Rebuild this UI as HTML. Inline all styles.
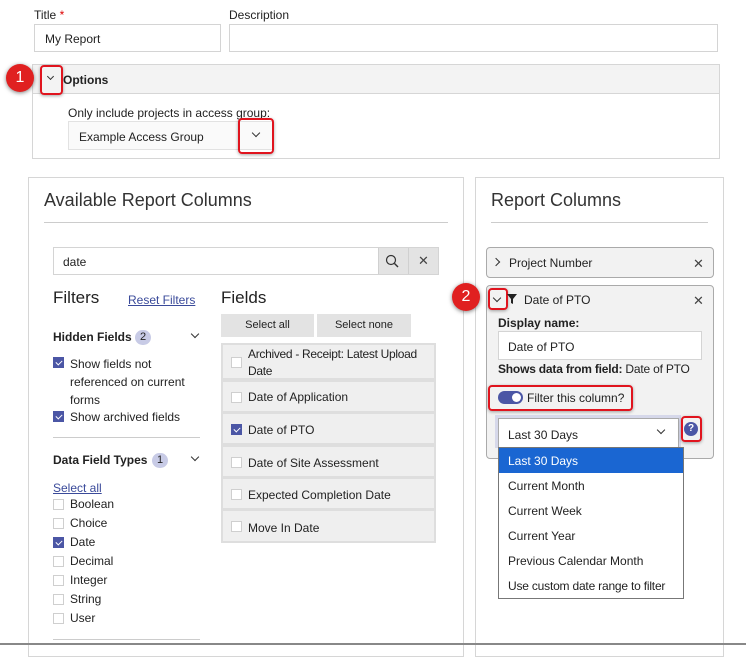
<!DOCTYPE html>
<html><head><meta charset="utf-8"><style>
*{box-sizing:border-box;margin:0;padding:0}
body{width:746px;height:645px;overflow:hidden;background:#fff;font-family:"Liberation Sans",sans-serif;font-size:12px;color:#222;position:relative}
.a{position:absolute;white-space:nowrap}
.inp{position:absolute;border:1px solid #d4d4d4;background:#fff}
.red{position:absolute;border:2px solid #e0141e;border-radius:4px;box-shadow:0 1px 3px rgba(0,0,0,.35)}
.badge{position:absolute;width:28px;height:28px;border-radius:50%;background:#e02020;color:#fff;font-size:16px;text-align:center;line-height:28px;box-shadow:0 1px 4px rgba(0,0,0,.5)}
.cb{position:absolute;width:11px;height:11px;border:1px solid #cfcfcf;background:#fff}
.cb.on{background:#4b56a5;border-color:#4b56a5}
.cb.on:after{content:"";position:absolute;left:3px;top:1px;width:3px;height:5px;border:solid #fff;border-width:0 1px 1px 0;transform:rotate(45deg)}
.row{position:absolute;left:221px;width:215px;background:#efefef;border:2px solid #dedede}
.chev{position:absolute;width:7px;height:7px;border:solid #333;border-width:0 1px 1px 0;transform:rotate(45deg)}
.lnk{color:#3a4a9a;text-decoration:underline}
</style></head><body>
<div class="a" style="left:34px;top:8px">Title <span style="color:#d00">*</span></div>
<div class="a" style="left:229px;top:8px">Description</div>
<div class="inp" style="left:34px;top:24px;width:187px;height:28px"><span class="a" style="left:10px;top:7px">My Report</span></div>
<div class="inp" style="left:229px;top:24px;width:489px;height:28px"></div>

<div class="a" style="left:32px;top:64px;width:688px;height:95px;border:1px solid #d6d6d6"></div>
<div class="a" style="left:33px;top:65px;width:686px;height:29px;background:#f3f3f3;border-bottom:1px solid #d6d6d6"></div>
<div class="chev" style="left:48px;top:74px;width:5px;height:5px"></div>
<div class="a" style="left:63px;top:73px;font-weight:bold">Options</div>
<div class="red" style="left:40px;top:65px;width:23px;height:30px"></div>
<div class="badge" style="left:6px;top:64px">1</div>
<div class="a" style="left:68px;top:106px">Only include projects in access group:</div>
<div class="inp" style="left:68px;top:121px;width:205px;height:29px;background:#fafafa;border-color:#e2e2e2"><span class="a" style="left:10px;top:8px">Example Access Group</span></div>
<div class="chev" style="left:253px;top:130px;width:6px;height:6px"></div>
<div class="red" style="left:238px;top:118px;width:36px;height:36px"></div>

<!-- left panel -->
<div class="a" style="left:28px;top:177px;width:436px;height:480px;border:1px solid #d6d6d6"></div>
<div class="a" style="left:44px;top:190px;font-size:18px;color:#333">Available Report Columns</div>
<div class="a" style="left:44px;top:222px;width:404px;height:1px;background:#ccc"></div>
<div class="inp" style="left:53px;top:247px;width:386px;height:28px"><span class="a" style="left:9px;top:7px">date</span></div>
<div class="a" style="left:378px;top:248px;width:30px;height:26px;background:#e3e3e3;border-left:1px solid #d0d0d0"></div>
<div class="a" style="left:408px;top:248px;width:30px;height:26px;background:#e3e3e3;border-left:1px solid #d0d0d0;text-align:center;line-height:26px;font-size:13px;color:#444">✕</div>
<svg class="a" style="left:385px;top:254px" width="15" height="15"><circle cx="6" cy="6" r="4.5" fill="none" stroke="#333" stroke-width="1.2"/><path d="M9.5 9.5 L13 13" stroke="#333" stroke-width="1.4"/></svg>

<div class="a" style="left:53px;top:288px;font-size:17px;color:#222">Filters</div>
<div class="a lnk" style="left:128px;top:293px">Reset Filters</div>
<div class="a" style="left:53px;top:330px;font-weight:bold">Hidden Fields</div>
<div class="a" style="left:135px;top:330px;width:16px;height:15px;border-radius:8px;background:#c8cbe6;font-size:11px;text-align:center;line-height:15px">2</div>
<div class="chev" style="left:192px;top:331px;width:6px;height:6px"></div>
<div class="cb on" style="left:53px;top:357px"></div>
<div class="a" style="left:70px;top:355px;line-height:18px">Show fields not<br>referenced on current<br>forms</div>
<div class="cb on" style="left:53px;top:411px"></div>
<div class="a" style="left:70px;top:410px">Show archived fields</div>
<div class="a" style="left:53px;top:437px;width:147px;height:1px;background:#ccc"></div>
<div class="a" style="left:53px;top:453px;font-weight:bold">Data Field Types</div>
<div class="a" style="left:152px;top:453px;width:16px;height:15px;border-radius:8px;background:#c8cbe6;font-size:11px;text-align:center;line-height:15px">1</div>
<div class="chev" style="left:192px;top:454px;width:6px;height:6px"></div>
<div class="a lnk" style="left:53px;top:481px">Select all</div>
<div class="cb" style="left:53px;top:499px"></div><div class="a" style="left:70px;top:497px">Boolean</div>
<div class="cb" style="left:53px;top:518px"></div><div class="a" style="left:70px;top:516px">Choice</div>
<div class="cb on" style="left:53px;top:537px"></div><div class="a" style="left:70px;top:535px">Date</div>
<div class="cb" style="left:53px;top:556px"></div><div class="a" style="left:70px;top:554px">Decimal</div>
<div class="cb" style="left:53px;top:575px"></div><div class="a" style="left:70px;top:573px">Integer</div>
<div class="cb" style="left:53px;top:594px"></div><div class="a" style="left:70px;top:592px">String</div>
<div class="cb" style="left:53px;top:613px"></div><div class="a" style="left:70px;top:611px">User</div>
<div class="a" style="left:53px;top:639px;width:147px;height:1px;background:#ccc"></div>

<div class="a" style="left:221px;top:288px;font-size:17px">Fields</div>
<div class="a" style="left:221px;top:314px;width:93px;height:23px;background:#e3e3e3;font-size:11px;text-align:center;line-height:23px">Select all</div>
<div class="a" style="left:317px;top:314px;width:94px;height:23px;background:#e3e3e3;font-size:11px;text-align:center;line-height:23px">Select none</div>
<div class="row" style="top:343px;height:37px"><div class="cb" style="left:8px;top:12px"></div><div class="a" style="left:25px;top:1px;line-height:17px;letter-spacing:-0.3px">Archived - Receipt: Latest Upload<br>Date</div></div>
<div class="row" style="top:380px;height:33px"><div class="cb" style="left:8px;top:10px"></div><div class="a" style="left:25px;top:8px">Date of Application</div></div>
<div class="row" style="top:412px;height:33px"><div class="cb on" style="left:8px;top:10px"></div><div class="a" style="left:25px;top:9px">Date of PTO</div></div>
<div class="row" style="top:445px;height:33px"><div class="cb" style="left:8px;top:10px"></div><div class="a" style="left:25px;top:9px">Date of Site Assessment</div></div>
<div class="row" style="top:477px;height:33px"><div class="cb" style="left:8px;top:10px"></div><div class="a" style="left:25px;top:9px">Expected Completion Date</div></div>
<div class="row" style="top:509px;height:34px"><div class="cb" style="left:8px;top:10px"></div><div class="a" style="left:25px;top:10px">Move In Date</div></div>

<!-- right panel -->
<div class="a" style="left:475px;top:177px;width:249px;height:480px;border:1px solid #d6d6d6"></div>
<div class="a" style="left:491px;top:190px;font-size:18px;color:#333">Report Columns</div>
<div class="a" style="left:491px;top:222px;width:217px;height:1px;background:#ccc"></div>
<div class="a" style="left:486px;top:247px;width:228px;height:31px;background:#f2f2f2;border:1px solid #aaa;border-radius:4px"></div>
<div class="chev" style="left:493px;top:259px;transform:rotate(-45deg);width:6px;height:6px"></div>
<div class="a" style="left:509px;top:256px">Project Number</div>
<div class="a" style="left:693px;top:256px;font-size:13px;color:#444">✕</div>
<div class="a" style="left:486px;top:285px;width:228px;height:174px;background:#f2f2f2;border:1px solid #aaa;border-radius:4px"></div>
<div class="chev" style="left:494px;top:295px;width:6px;height:6px"></div>
<div class="red" style="left:488px;top:288px;width:20px;height:22px"></div>
<div class="badge" style="left:452px;top:283px">2</div>
<svg class="a" style="left:507px;top:294px" width="10" height="10"><path d="M0 0H10L6 5V10L4 9V5Z" fill="#222"/></svg>
<div class="a" style="left:524px;top:293px">Date of PTO</div>
<div class="a" style="left:693px;top:293px;font-size:13px;color:#444">✕</div>
<div class="a" style="left:498px;top:316px;font-weight:bold">Display name:</div>
<div class="inp" style="left:498px;top:331px;width:204px;height:29px"><span class="a" style="left:9px;top:8px">Date of PTO</span></div>
<div class="a" style="left:498px;top:362px;letter-spacing:-0.2px"><b>Shows data from field:</b> Date of PTO</div>
<div class="a" style="left:498px;top:391px;width:25px;height:13px;border-radius:7px;background:#4b56a5"><div class="a" style="left:14px;top:2px;width:9px;height:9px;border-radius:50%;background:#fff"></div></div>
<div class="a" style="left:527px;top:391px">Filter this column?</div>
<div class="red" style="left:488px;top:385px;width:145px;height:26px"></div>
<div class="a" style="left:495px;top:415px;width:186px;height:33px;background:#d6d8ea"></div>
<div class="inp" style="left:498px;top:418px;width:181px;height:30px;border-color:#aaa"><span class="a" style="left:9px;top:9px">Last 30 Days</span></div>
<div class="chev" style="left:658px;top:427px;width:6px;height:6px"></div>
<div class="a" style="left:684px;top:422px;width:14px;height:14px;border-radius:50%;background:#4b56a5;color:#fff;font-size:10px;font-weight:bold;text-align:center;line-height:14px">?</div>
<div class="red" style="left:681px;top:416px;width:21px;height:26px"></div>
<div class="a" style="left:498px;top:447px;width:186px;height:152px;background:#fff;border:1px solid #777"></div>
<div class="a" style="left:499px;top:448px;width:184px;height:25px;background:#1a66d2"></div>
<div class="a" style="left:508px;top:454px;color:#fff">Last 30 Days</div>
<div class="a" style="left:508px;top:479px">Current Month</div>
<div class="a" style="left:508px;top:504px">Current Week</div>
<div class="a" style="left:508px;top:529px">Current Year</div>
<div class="a" style="left:508px;top:554px">Previous Calendar Month</div>
<div class="a" style="left:508px;top:579px;letter-spacing:-0.2px">Use custom date range to filter</div>

<div class="a" style="left:0;top:643px;width:746px;height:2px;background:#888"></div>
</body></html>
